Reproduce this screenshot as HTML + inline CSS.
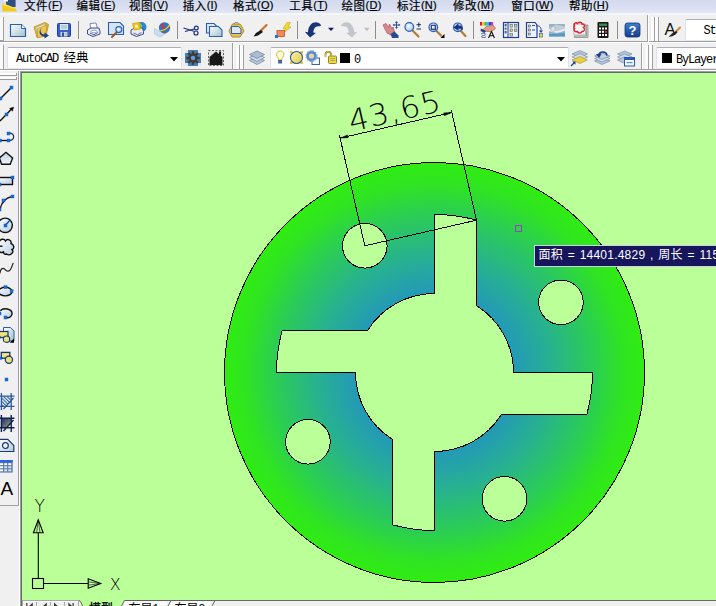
<!DOCTYPE html>
<html lang="zh"><head><meta charset="utf-8"><title>AutoCAD</title>
<style>
html,body{margin:0;padding:0;}
body{width:716px;height:606px;overflow:hidden;background:#f0f0f0;position:relative;font-family:"Liberation Sans","Noto Sans CJK SC",sans-serif;font-size:12px;color:#000;}
.abs{position:absolute;}
#menubar{left:0;top:0;width:716px;height:13px;background:linear-gradient(#d4daee 0%,#dae0f2 60%,#e2e7f5 100%);overflow:hidden;}
#menusep{left:0;top:13px;width:716px;height:2px;background:#f4f6fb;}
.mi{position:absolute;top:-3px;line-height:16px;font-size:12px;white-space:nowrap;}
.mi u{text-decoration:underline;text-underline-offset:0.5px;text-decoration-thickness:1px;}
.mi .cjm{position:relative;top:0.8px;font-size:11.5px;letter-spacing:0.5px;}
.mi .lt{font-size:11px;letter-spacing:0.2px;}
.mi{-webkit-text-stroke:0.2px #000;}
#row1{left:0;top:15px;width:716px;height:26px;background:#f0f0f0;}
.hline{left:0;width:716px;height:1px;}
.sep{width:1px;background:#a0a0a0;}
.combo{background:#fff;border:1px solid #dfe2ee;border-top-color:#adadb6;border-bottom-color:#e6e8f1;border-radius:2px;box-sizing:border-box;}
.mono{font-family:"Liberation Mono","Noto Sans CJK SC",monospace;font-size:12px;letter-spacing:-1.2px;white-space:nowrap;line-height:14px;}
.mono .cj{letter-spacing:0;font-family:"Noto Sans CJK SC",sans-serif;font-size:12.5px;}
.m11{font-size:11px;letter-spacing:-0.6px;}
#canvas{left:22px;top:73px;width:694px;height:527px;background:#bbff99;}
.draw{position:absolute;left:0;top:0;}
#tip{left:534px;top:245px;width:200px;height:21.5px;box-sizing:border-box;background:#17155c;border:1px solid #cfcfe6;color:#fff;font-size:12px;line-height:19.5px;padding-left:3.5px;letter-spacing:0.22px;word-spacing:1.2px;white-space:nowrap;overflow:hidden;}
#pick{left:515px;top:225px;width:7px;height:7px;box-sizing:border-box;border:1px solid #9a3fc0;}
.tabtxt{position:absolute;top:601.5px;font-size:12px;line-height:14px;white-space:nowrap;}
</style></head><body>
<div id="menubar" class="abs"><span class="mi" style="left:24px"><span class="cjm">文件</span><span class="lt">(<u>F</u>)</span></span><span class="mi" style="left:76.4px"><span class="cjm">编辑</span><span class="lt">(<u>E</u>)</span></span><span class="mi" style="left:129px"><span class="cjm">视图</span><span class="lt">(<u>V</u>)</span></span><span class="mi" style="left:182.7px"><span class="cjm">插入</span><span class="lt">(<u>I</u>)</span></span><span class="mi" style="left:233px"><span class="cjm">格式</span><span class="lt">(<u>O</u>)</span></span><span class="mi" style="left:289.3px"><span class="cjm">工具</span><span class="lt">(<u>T</u>)</span></span><span class="mi" style="left:341.6px"><span class="cjm">绘图</span><span class="lt">(<u>D</u>)</span></span><span class="mi" style="left:396.9px"><span class="cjm">标注</span><span class="lt">(<u>N</u>)</span></span><span class="mi" style="left:452.9px"><span class="cjm">修改</span><span class="lt">(<u>M</u>)</span></span><span class="mi" style="left:511.2px"><span class="cjm">窗口</span><span class="lt">(<u>W</u>)</span></span><span class="mi" style="left:568.9px"><span class="cjm">帮助</span><span class="lt">(<u>H</u>)</span></span></div>
<div id="menusep" class="abs"></div>
<div id="row1" class="abs"></div>
<div class="abs hline" style="top:41px;background:#a0a0a0"></div>
<div class="abs hline" style="top:42px;background:#fff"></div>
<div class="abs hline" style="top:69px;background:#a0a0a0"></div>
<div class="abs hline" style="top:70px;background:#fff"></div>
<!-- row 2 combos -->
<div class="abs combo" style="left:7px;top:47px;width:175px;height:22px"></div>
<div class="abs mono" style="left:16px;top:50px">AutoCAD<span class="cj" style="margin-left:5.5px">经典</span></div>
<div class="abs combo" style="left:270px;top:47px;width:299px;height:22px"></div>
<div class="abs mono" style="left:354px;top:53px">0</div>
<div class="abs combo" style="left:656px;top:47px;width:80px;height:22px"></div>
<div class="abs mono" style="left:676px;top:53px">ByLayer</div>
<div class="abs combo" style="left:685px;top:19px;width:60px;height:22px"></div>
<div class="abs mono" style="left:703.5px;top:24px">St</div>
<!-- canvas frame -->
<div class="abs" style="left:18px;top:71px;width:1px;height:434px;background:#a0a0a0"></div>
<div class="abs" style="left:19px;top:71px;width:1px;height:535px;background:#fff"></div>
<div class="abs" style="left:20px;top:71px;width:696px;height:530px;background:#a0a0a0"></div>
<div class="abs" style="left:21px;top:72px;width:695px;height:529px;background:#696969"></div>
<div id="canvas" class="abs"></div>
<div class="abs" style="left:0;top:505px;width:19px;height:1px;background:#a0a0a0"></div>
<!-- bottom tab strip -->
<div class="abs" style="left:22px;top:601px;width:694px;height:5px;background:#f0f0f0"></div>
<div class="abs" style="left:20px;top:600px;width:1px;height:6px;background:#a0a0a0"></div><div class="abs" style="left:21px;top:600px;width:1px;height:6px;background:#696969"></div>
<svg class="draw" width="716" height="606" viewBox="0 0 716 606">
<defs>
<radialGradient id="gf" gradientUnits="userSpaceOnUse" cx="434.5" cy="372.5" r="210.0">
<stop offset="0.30" stop-color="#2192c4"/>
<stop offset="0.375" stop-color="#2399b8"/>
<stop offset="0.55" stop-color="#27b092"/>
<stop offset="0.75" stop-color="#2bcc56"/>
<stop offset="0.9" stop-color="#2fe422"/>
<stop offset="1" stop-color="#30ec12"/>
</radialGradient>
</defs>
<path d="M224.50,372.50 A210.00,210.00 0 1 1 644.50,372.50 A210.00,210.00 0 1 1 224.50,372.50 Z M434.50,293.50 L434.50,214.50 A158.00,158.00 0 0 1 476.50,220.18 L476.50,305.59 A79.00,79.00 0 0 1 513.50,372.50 L592.50,372.50 A158.00,158.00 0 0 1 586.82,414.50 L501.41,414.50 A79.00,79.00 0 0 1 434.50,451.50 L434.50,530.50 A158.00,158.00 0 0 1 392.50,524.82 L392.50,439.41 A79.00,79.00 0 0 1 355.50,372.50 L276.50,372.50 A158.00,158.00 0 0 1 282.18,330.50 L367.59,330.50 A79.00,79.00 0 0 1 434.50,293.50 Z M538.65,302.30 A22.30,22.30 0 1 1 583.25,302.30 A22.30,22.30 0 1 1 538.65,302.30 Z M342.50,245.80 A22.30,22.30 0 1 1 387.10,245.80 A22.30,22.30 0 1 1 342.50,245.80 Z M285.65,441.80 A22.30,22.30 0 1 1 330.25,441.80 A22.30,22.30 0 1 1 285.65,441.80 Z M482.15,498.80 A22.30,22.30 0 1 1 526.75,498.80 A22.30,22.30 0 1 1 482.15,498.80 Z" fill="url(#gf)" fill-rule="evenodd" stroke="#000" stroke-width="1" shape-rendering="crispEdges"/>
<g stroke="#000" stroke-width="1" fill="none" shape-rendering="crispEdges">
<line x1="364.80" y1="245.80" x2="339.50" y2="135.46"/>
<line x1="476.50" y1="220.18" x2="451.20" y2="109.85"/>
<line x1="340.10" y1="138.10" x2="451.80" y2="112.48"/>
<line x1="364.80" y1="245.80" x2="476.50" y2="220.18"/>
</g>
<path d="M340.10,138.10 L347.59,134.94 L348.21,137.67 Z M451.80,112.48 L443.69,112.90 L444.32,115.63 Z" fill="#000" stroke="#000" stroke-width="0.5"/>
<text transform="translate(395.95,125.29) rotate(-12.92) translate(2.2,-3.8) scale(1.03,1)" letter-spacing="1.2" text-anchor="middle" font-family="'DejaVu Sans Light','DejaVu Sans',sans-serif" font-weight="200" font-size="30" fill="#000">43,65</text>
</svg>
<svg class="draw" width="716" height="606" viewBox="0 0 716 606">
<defs>
<linearGradient id="gdoc" x1="0" y1="0" x2="1" y2="1"><stop offset="0" stop-color="#ffffff"/><stop offset="1" stop-color="#9fc2c8"/></linearGradient>
<linearGradient id="glb" x1="0" y1="0" x2="1" y2="1"><stop offset="0" stop-color="#ffffff"/><stop offset="1" stop-color="#b4cbe2"/></linearGradient>
<linearGradient id="glb2" x1="0" y1="0" x2="0" y2="1"><stop offset="0" stop-color="#b9cde0"/><stop offset="1" stop-color="#f4f8fc"/></linearGradient>
<linearGradient id="ggrad" x1="0" y1="0" x2="1" y2="1"><stop offset="0" stop-color="#1c2f7a"/><stop offset="0.5" stop-color="#5a6670"/><stop offset="1" stop-color="#c8b830"/></linearGradient>
<linearGradient id="ghelp" x1="0" y1="0" x2="0" y2="1"><stop offset="0" stop-color="#3f7fd0"/><stop offset="1" stop-color="#123f8c"/></linearGradient>
<radialGradient id="glens" cx="0.4" cy="0.35" r="0.7"><stop offset="0" stop-color="#ffffff"/><stop offset="1" stop-color="#9cc4e8"/></radialGradient>
<linearGradient id="gyel" x1="0" y1="0" x2="1" y2="1"><stop offset="0" stop-color="#fff7a0"/><stop offset="1" stop-color="#e0c84a"/></linearGradient>
<pattern id="hat" width="2.4" height="2.4" patternUnits="userSpaceOnUse" patternTransform="rotate(-45)"><rect width="2.4" height="2.4" fill="#fff"/><rect width="1.2" height="2.4" fill="#2d62a8"/></pattern>
</defs>
<!-- ===== row 1 grips / separators ===== -->
<rect x="0" y="17" width="3" height="24" fill="#fafafa"/><rect x="3" y="17" width="1" height="24" fill="#a0a0a0"/><rect x="0" y="40" width="4" height="1" fill="#a0a0a0"/>
<g fill="#8c8c8c">
<rect x="78" y="21" width="1" height="18"/><rect x="177" y="21" width="1" height="18"/><rect x="297" y="21" width="1" height="18"/>
<rect x="375" y="21" width="1" height="18"/><rect x="473" y="21" width="1" height="18"/><rect x="617" y="21" width="1" height="18"/>
</g>
<rect x="647" y="15" width="1" height="27" fill="#a0a0a0"/><rect x="648" y="15" width="1" height="27" fill="#fff"/>
<g><rect x="651" y="17" width="3" height="24" fill="#fbfbfb"/><rect x="654" y="17" width="1" height="24" fill="#a0a0a0"/><rect x="655" y="17" width="3" height="24" fill="#fbfbfb"/><rect x="658" y="17" width="1" height="24" fill="#a0a0a0"/></g>
<!-- app icon -->
<path d="M6,0 H15.600 V7 H6 Z" fill="#2f4f80"/><path d="M4,0 H8 V1.500 H4 Z" fill="#f4f4f4"/>
<path d="M2.300,3 L15.600,8.300 L17,11.500 H2.300 Z" fill="#f2cc18"/><path d="M2.300,3 L15.600,8.300 L16,9.300 L2.300,5 Z" fill="#f8e060"/>
<!-- New -->
<path d="M10.5,24.5 H21.5 L25.5,28.5 V36.5 H10.5 Z" fill="url(#gdoc)" stroke="#2b5fb0" stroke-width="1.2"/>
<path d="M21.5,24.5 V28.5 H25.5" fill="#fff" stroke="#2b5fb0" stroke-width="1"/>
<!-- Open -->
<path d="M34,27 L45,22.5 L48.5,24.5 L46,36 L37,37.5 Z" fill="#e9b93a" stroke="#b88a20" stroke-width="0.8"/>
<path d="M36,27.5 L45,24 L43.5,33 L38,36 Z" fill="#e8f2fa" stroke="#8fb0d0" stroke-width="0.5"/>
<path d="M37.5,28.5 L47,25 L45.5,36 L37.5,37.5 Z" fill="#f0c74c" stroke="#b88a20" stroke-width="0.6"/>
<path d="M42.5,27.5 C39.5,29.5 40,34 44.5,34.5 L44.5,32.5 L49,35.5 L44.5,38.5 L44.5,36.5 C38.5,36 38,30 42.5,27.5 Z" fill="#1d3f86"/>
<!-- Save -->
<rect x="57.5" y="23.5" width="13" height="13" rx="1" fill="#3a63c8" stroke="#1f3f9a" stroke-width="1"/>
<rect x="60" y="24" width="8" height="6" fill="#dfe9f7"/>
<rect x="61" y="25.5" width="6" height="0.9" fill="#8aa4cc"/><rect x="61" y="27.5" width="6" height="0.9" fill="#8aa4cc"/>
<rect x="60.5" y="32" width="7" height="4.5" fill="#c8d4e8"/><rect x="62" y="32.5" width="2" height="4" fill="#2a4fb8"/><rect x="65.5" y="33" width="1.5" height="2" fill="#c8c060"/>
<!-- Print -->
<path d="M90,23.5 L96,23 L97.5,28.5 L91,29.5 Z" fill="#fff" stroke="#5a6aa0" stroke-width="0.8"/>
<path d="M87.5,30 L91,28 L99,28 L100,31.5 L100,34 L93,36.5 L87.5,34 Z" fill="#e8ecf6" stroke="#3a4a8a" stroke-width="1"/>
<path d="M90,33 L94,34.8 L98,32.5" fill="none" stroke="#3a4a8a" stroke-width="0.8"/>
<ellipse cx="94" cy="31.5" rx="3" ry="1.3" fill="#fff" stroke="#5a6aa0" stroke-width="0.6"/>
<!-- Preview -->
<path d="M108.5,22.5 H120 L123.5,26 V34.5 H108.5 Z" fill="#d4e4f4" stroke="#2b5fb0" stroke-width="1.1"/>
<line x1="117" y1="32" x2="112" y2="37" stroke="#9a5a20" stroke-width="2" stroke-linecap="round"/>
<circle cx="118.8" cy="29.6" r="3" fill="url(#glens)" stroke="#2b5fb0" stroke-width="1.1"/>
<!-- Publish -->
<circle cx="141.5" cy="27" r="5" fill="#2f86c8"/><path d="M139,23 C142,25 142,29 139.5,31.5" fill="none" stroke="#7fd08a" stroke-width="1.5"/>
<path d="M131,30 L134.5,28 L142.5,28 L143.5,31.5 L143.5,34 L136.5,36.5 L131,34 Z" fill="#e8ecf6" stroke="#3a4a8a" stroke-width="1"/>
<path d="M133.5,33 L137.5,34.8 L141.5,32.5" fill="none" stroke="#3a4a8a" stroke-width="0.8"/>
<path d="M132.5,23.5 L139.5,22.5 L140.5,29 L134,30 Z" fill="#f2c818" stroke="#c89a10" stroke-width="0.7"/>
<rect x="135.3" y="25" width="2.6" height="2.6" fill="#fff8c0"/>
<!-- 3DDWF -->
<path d="M154.5,28.5 L160,31.5 L166,28.5 L166,33.5 L160,37 L154.5,34 Z" fill="#c9dcf0" stroke="#a9c0dc" stroke-width="0.6"/>
<circle cx="164.5" cy="27.8" r="5.6" fill="#2a78c8"/>
<path d="M160,25 C163,28 167,29 170,27" fill="none" stroke="#e03030" stroke-width="1.2"/>
<path d="M163,22.8 C161.5,26 162.5,30.5 165,33.2" fill="none" stroke="#e03030" stroke-width="1.1"/>
<path d="M160,31 C164,30.5 168,27.5 169.5,25" fill="none" stroke="#e8e030" stroke-width="1.2"/>
<!-- Cut -->
<path d="M183.5,28 L194,31.2 M185,31.5 L194,29" stroke="#1d2f7a" stroke-width="1.1" fill="none"/>
<circle cx="196.3" cy="28" r="1.9" fill="none" stroke="#1d2f7a" stroke-width="1.2"/>
<circle cx="196" cy="33" r="2" fill="none" stroke="#1d2f7a" stroke-width="1.2"/>
<!-- Copy -->
<path d="M206.5,23.5 H214 L217,26.5 V33 H206.5 Z" fill="#d8e6f4" stroke="#2b5fb0" stroke-width="1.1"/>
<path d="M209.5,26.5 H218.5 L222,30 V36.5 H209.5 Z" fill="url(#gdoc)" stroke="#2b5fb0" stroke-width="1.1"/>
<!-- Paste -->
<path d="M232,24.5 L236.5,22.5 L241,25 L244,31 L240,37 L232,37 L229,31 Z" fill="#e4c050" stroke="#b08c28" stroke-width="1"/>
<path d="M234,24 C235,22 238,22 239,24 Z" fill="#f0f0f0" stroke="#606060" stroke-width="0.6"/>
<path d="M231.5,26.5 H238.5 L241,29 V33.5 H231.5 Z" fill="#dce8f6" stroke="#2b5fb0" stroke-width="1"/>
<!-- Match prop -->
<path d="M266.5,25 L260,31.5" stroke="#c8782c" stroke-width="2.2" stroke-linecap="round"/>
<path d="M261,30 L263,32 L258,35.5 L253.5,36.5 L256,33 Z" fill="#151515"/>
<!-- Block editor -->
<path d="M287,22.5 L290.5,22.5 L288,27 L291,27 L283,33.5 L285.5,28.5 L283,28.5 Z" fill="#f8d820" stroke="#c09a10" stroke-width="0.5"/>
<rect x="277" y="30.5" width="7.5" height="6" fill="#f08a5a" stroke="#c0502a" stroke-width="0.8"/>
<rect x="275" y="35" width="3" height="3" fill="#1f6fe0"/>
<!-- Undo -->
<path d="M304.8,31.8 L310.1,37.6 L315.9,32.9 L313.3,32.6 C313.5,28.5 315.5,25.5 319.6,26.3 L321.2,25.4 C319,21.5 313.5,21.5 310.8,24.5 C309,26.5 308,29.5 308,32.2 Z" fill="#1a3478"/>
<path d="M328,27.700 H334 L331,31 Z" fill="#141a6a"/>
<!-- Redo -->
<path d="M357.3,31.8 L352.0,37.6 L346.2,32.9 L348.8,32.6 C348.6,28.5 346.6,25.5 342.5,26.3 L340.9,25.4 C343.1,21.5 348.6,21.5 351.3,24.5 C353.1,26.5 354.1,29.5 354.1,32.2 Z" fill="#c2c6ca"/>
<path d="M364,27.700 H369.600 L366.800,31 Z" fill="#b8b8c8"/>
<!-- Pan -->
<path d="M383,25 L386,23.5 L388.5,27.5 L389.5,24 L392,29 L393,27 L394.5,32 L391,35 L387,33 Z" fill="#d88a8a" stroke="#a85060" stroke-width="0.7"/>
<path d="M390.5,34 L394.5,31.5 L398.5,35.5 L398.5,38 L392,38 Z" fill="#2a4a8c"/>
<path d="M396.5,22 V28 M393.5,25 H399.5" stroke="#2a4a9c" stroke-width="1"/><path d="M396.5,21 L395,23 H398 Z M396.5,29 L395,27 H398 Z M392.5,25 L394.5,23.7 V26.3 Z M400.5,25 L398.5,23.7 V26.3 Z" fill="#2a4a9c"/>
<!-- Zoom realtime -->
<line x1="412.5" y1="30.5" x2="418.5" y2="36.5" stroke="#b87838" stroke-width="2.2" stroke-linecap="round"/>
<circle cx="409.3" cy="27" r="4.3" fill="url(#glens)" stroke="#2b5fb0" stroke-width="1.2"/>
<path d="M418.8,22.5 V27 M416.5,24.7 H421 M416.5,29 H421" stroke="#1a2a5a" stroke-width="1"/>
<!-- Zoom window -->
<line x1="436" y1="30.5" x2="441" y2="35.5" stroke="#b87838" stroke-width="2.2" stroke-linecap="round"/>
<circle cx="433.3" cy="27.3" r="4.3" fill="url(#glens)" stroke="#2b5fb0" stroke-width="1.2"/>
<rect x="431.3" y="25.3" width="4" height="4" fill="none" stroke="#1a2a7a" stroke-width="1.1"/>
<path d="M444.5,34 V38 H440.5 Z" fill="#000"/>
<!-- Zoom prev -->
<line x1="460.5" y1="30.5" x2="465.5" y2="36" stroke="#b87838" stroke-width="2.2" stroke-linecap="round"/>
<circle cx="457.8" cy="27.3" r="4.3" fill="url(#glens)" stroke="#2b5fb0" stroke-width="1.2"/>
<path d="M453.5,27.5 L458.5,23 L458.5,25.5 C462,25 463.5,27.5 462.5,30.5 C461.5,28.5 460.5,28.5 458.5,28.8 L458.5,31 Z" fill="#1a3382"/>
<!-- Properties -->
<rect x="480" y="22" width="2.2" height="3.5" fill="#e02020"/><rect x="482.2" y="22" width="2.2" height="3.5" fill="#f0d020"/><rect x="484.4" y="22" width="2.2" height="3.5" fill="#30c030"/><rect x="486.6" y="22" width="2.2" height="3.5" fill="#20c0e0"/><rect x="488.8" y="22" width="2.2" height="3.5" fill="#3040e0"/><rect x="491" y="22" width="2.2" height="3.5" fill="#d030d0"/>
<path d="M483,29.5 L487,26 L493.5,25.5 L495.5,28.5 L491.5,31.5 L486,31.5 Z" fill="#e0a088" stroke="#a86850" stroke-width="0.7"/>
<path d="M481,28.5 L486,31 L484.5,33 L480.5,31 Z" fill="#30407a"/>
<path d="M481,34 C483,32.5 485,33 485.5,34.2 C485.5,35.8 481.5,35.2 481.5,36.6 C482,37.8 484.5,37.8 486,36.8" fill="none" stroke="#2a5aa0" stroke-width="1"/>
<path d="M488.5,38 L491.5,31.5 L494.5,38 M489.7,35.8 H493.3" fill="none" stroke="#101010" stroke-width="1.1"/>
<!-- DesignCenter -->
<rect x="503.5" y="22.5" width="15" height="15" fill="#eef3fb" stroke="#1f3f9a" stroke-width="1.2"/>
<rect x="507.5" y="22.5" width="1" height="15" fill="#1f3f9a"/>
<g fill="#e8d84a" stroke="#2a4a9a" stroke-width="0.5"><rect x="505" y="24.5" width="1.6" height="1.6"/><rect x="505" y="28" width="1.6" height="1.6"/><rect x="505" y="31.5" width="1.6" height="1.6"/><rect x="510" y="24.5" width="2.6" height="2.6"/><rect x="514.3" y="24.5" width="2.6" height="2.6"/><rect x="510" y="29" width="2.6" height="2.6"/><rect x="514.3" y="29" width="2.6" height="2.6"/><rect x="510" y="33.5" width="2.6" height="2.6"/></g>
<!-- Tool palettes -->
<path d="M526.5,22.5 H535 L537,25 V37.5 H526.5 Z" fill="#eef3fb" stroke="#1f3f9a" stroke-width="1.2"/>
<g fill="#e8d84a" stroke="#2a4a9a" stroke-width="0.5"><rect x="528.5" y="25" width="2" height="2"/><rect x="528.5" y="29" width="2" height="2"/><rect x="528.5" y="33" width="2" height="2"/></g>
<rect x="532" y="25" width="3" height="1" fill="#2a4a9a"/><rect x="532" y="29.5" width="3" height="1" fill="#2a4a9a"/>
<path d="M536,26 C540,25 541.5,28 541,31" fill="none" stroke="#2a4a9a" stroke-width="1"/><path d="M539,30.5 L543,30.5 L541,33 Z" fill="#2a4a9a"/>
<rect x="539.5" y="33.5" width="3" height="3.5" fill="#e8d84a" stroke="#2a4a9a" stroke-width="0.6"/>
<!-- Sheet set -->
<rect x="549" y="24" width="16" height="12.5" fill="#8fb3cf"/>
<path d="M549,28 L556,24.5 L565,26.5 L565,31 L557,33.5 L549,31.5 Z" fill="#c4ccd4"/>
<path d="M549,30 L557,32 L565,29.5" fill="none" stroke="#eef2f6" stroke-width="1.4"/>
<ellipse cx="553" cy="29" rx="2.2" ry="2.6" fill="#dfe4e8" stroke="#9aa4ae" stroke-width="0.5"/>
<path d="M549,34 L565,33 V36.5 H549 Z" fill="#5a9ac0"/>
<!-- Markup -->
<path d="M576,25 H588 V37.5 H574.5 V36 H586.5 V25" fill="#d4d4d4" stroke="#707070" stroke-width="0.6"/>
<rect x="574" y="24" width="11.5" height="11" fill="#f4f4f4" stroke="#8a8a8a" stroke-width="0.6"/>
<path d="M574.5,26 C573,23.5 576,22 577.5,23.5 C578.5,21.5 582,22 582,24 C584.5,23.5 585.5,26.5 583.5,27.5 C585.5,29 584,32 582,31.5 C581,33.5 578,33.5 577.5,31.5 C575,32.5 573,30 574.5,28.5 C573.5,28 573.5,26.5 574.5,26 Z" fill="none" stroke="#e02030" stroke-width="1.4"/>
<!-- Calc -->
<rect x="597.5" y="22" width="11" height="16" rx="1" fill="#181818"/>
<rect x="599" y="23.5" width="8" height="2.5" fill="#3a8a4a"/>
<g fill="#fff"><rect x="599" y="27.5" width="2" height="2"/><rect x="602" y="27.5" width="2" height="2"/><rect x="605" y="27.5" width="2" height="2"/><rect x="599" y="30.8" width="2" height="2"/><rect x="602" y="30.8" width="2" height="2"/><rect x="599" y="34" width="2" height="2"/><rect x="602" y="34" width="2" height="2"/><rect x="605" y="34" width="2" height="2"/></g><rect x="605" y="30.8" width="2" height="2" fill="#e03030"/>
<!-- Help -->
<rect x="625" y="23" width="15" height="14" rx="2.5" fill="url(#ghelp)" stroke="#0e3478" stroke-width="0.8"/>
<text x="632.5" y="35" text-anchor="middle" font-family="'Liberation Sans',sans-serif" font-weight="bold" font-size="13" fill="#fff">?</text>
<!-- Text style icon -->
<text x="664.5" y="34.5" font-family="'Liberation Sans',sans-serif" font-size="16.5" fill="#101010">A</text>
<path d="M680,27.5 L675.5,32" stroke="#d8863a" stroke-width="2" stroke-linecap="round"/>
<path d="M676.5,31 L677.5,32.5 L673,36 L668.5,37 L672,33.5 Z" fill="#202020"/>
<!-- ===== row 2 ===== -->
<rect x="0" y="45" width="3" height="24" fill="#fafafa"/><rect x="3" y="45" width="1" height="24" fill="#a0a0a0"/>
<path d="M170,57 H178 L174,61.5 Z" fill="#000"/>
<!-- gear -->
<rect x="185" y="50" width="16" height="16" fill="#4a7fb4"/>
<g fill="#dfe8f2"><rect x="185" y="50" width="3" height="3"/><rect x="198" y="50" width="3" height="3"/><rect x="185" y="63" width="3" height="3"/><rect x="198" y="63" width="3" height="3"/></g>
<g transform="translate(193,58)" fill="#3c3c3c"><circle r="4.6"/><g id="tooth"><rect x="-1.3" y="-6.8" width="2.6" height="13.6"/></g><use href="#tooth" transform="rotate(45)"/><use href="#tooth" transform="rotate(90)"/><use href="#tooth" transform="rotate(135)"/><circle r="2.2" fill="#6a9ad0"/></g>
<!-- house -->
<rect x="208.500" y="50.500" width="15" height="15" fill="#e4e4e4" stroke="#606060" stroke-width="1" stroke-dasharray="2 1.5"/>
<path d="M209.500,57 L216,51.500 L222.500,57 V65 H209.500 Z" fill="#181818"/><rect x="219" y="51.500" width="2" height="4" fill="#181818"/>
<rect x="232" y="43" width="1" height="26" fill="#a0a0a0"/><rect x="233" y="43" width="1" height="26" fill="#fff"/>
<g><rect x="236" y="45" width="3" height="24" fill="#fbfbfb"/><rect x="239" y="45" width="1" height="24" fill="#a0a0a0"/><rect x="240" y="45" width="3" height="24" fill="#fbfbfb"/><rect x="243" y="45" width="1" height="24" fill="#a0a0a0"/></g>
<!-- layers -->
<g stroke="#6a7f98" stroke-width="0.7"><path d="M249.500,60.500 L257,57 L264.500,60.500 L257,64.500 Z" fill="#b8c8dc"/><path d="M249.500,57.500 L257,54 L264.500,57.500 L257,61.500 Z" fill="#cfdcea"/><path d="M249.500,54.500 L257,51 L264.500,54.500 L257,58.500 Z" fill="#a9bcd4"/></g>
<!-- bulb -->
<path d="M280.200,51 C276.500,51 275.500,55 277.800,57.500 C278.600,58.500 278.500,59.500 278.600,60 H281.800 C281.900,59.500 281.800,58.500 282.600,57.500 C284.900,55 283.900,51 280.200,51 Z" fill="#fffbe0" stroke="#cfb21c" stroke-width="1"/>
<rect x="278.600" y="60.300" width="3.200" height="2.800" fill="#4a6ab0" stroke="#2a3a70" stroke-width="0.5"/>
<!-- sun -->
<g fill="#e8c020"><rect x="290" y="51" width="2.500" height="2.500"/><rect x="300.500" y="51" width="2.500" height="2.500"/><rect x="290" y="61.500" width="2.500" height="2.500"/><rect x="300.500" y="61.500" width="2.500" height="2.500"/></g>
<circle cx="296.500" cy="57.500" r="6" fill="url(#gyel)" stroke="#2a5ab0" stroke-width="1.1"/>
<!-- sun + viewport -->
<rect x="312" y="58" width="7.500" height="6.500" fill="#f4f8fc" stroke="#3a62a8" stroke-width="1"/>
<circle cx="311.500" cy="56" r="5.300" fill="#5a8ad0" stroke="#86a8dc" stroke-width="1.400" stroke-dasharray="1.600 1.200"/>
<circle cx="311.500" cy="56" r="2.600" fill="#e8d8a0"/>
<!-- lock -->
<path d="M325.500,57 V54.500 C325.500,51 331,51 331,54.500 V55.500" fill="none" stroke="#8a7a18" stroke-width="1.700"/>
<path d="M325.500,57 V54.500 C325.500,51 331,51 331,54.500 V55.500" fill="none" stroke="#f0e060" stroke-width="0.700"/>
<rect x="328.500" y="56" width="8" height="7.500" rx="1" fill="#e8d850" stroke="#8a7a18" stroke-width="0.900"/>
<path d="M330,58.500 H335 M330,60.500 H335" stroke="#a89828" stroke-width="0.700"/>
<rect x="340" y="53" width="10" height="10" fill="#000"/>
<path d="M557,57 H565 L561,61.500 Z" fill="#000"/>
<!-- make object layer current -->
<g stroke="#6a7f98" stroke-width="0.600"><path d="M572,54 L580,50.500 L587.500,54 L580,57.500 Z" fill="#b4c6dc"/><path d="M572,57 L580,53.500 L587.500,57 L580,60.500 Z" fill="#d0dcea"/><path d="M572,60 L580,56.500 L587.500,60 L580,63.500 Z" fill="#e8d040" stroke="#a89020"/></g>
<path d="M571,66 L574.500,62.500" stroke="#1a3a9a" stroke-width="1.200"/><path d="M575.500,61.500 V64.700 L572.300,61.500 Z" fill="#1a3a9a"/>
<!-- layer previous -->
<g stroke="#6a7f98" stroke-width="0.600"><path d="M594.500,61 L602,58 L610,61 L602,64.500 Z" fill="#b8c8dc"/><path d="M594.500,58.500 L602,55.500 L610,58.500 L602,62 Z" fill="#d4deea"/><path d="M594.500,56 L602,53 L610,56 L602,59.500 Z" fill="#c0cfe0"/></g>
<path d="M598.500,55.500 C599.500,51 606,50.500 607,55.500" fill="none" stroke="#1a3a8a" stroke-width="1.600"/><path d="M596,54 L599,58 L601.500,54 Z" fill="#1a3a8a"/>
<!-- layer states -->
<g stroke="#6a7f98" stroke-width="0.600"><path d="M617.500,54 L624.500,51 L632,54 L624.500,57.500 Z" fill="#b4c6dc"/><path d="M617.500,57 L624.500,54 L632,57 L624.500,60.500 Z" fill="#d0dcea"/><path d="M617.500,60 L624.500,57 L632,60 L624.500,63.500 Z" fill="#b8c8dc"/></g>
<rect x="624.500" y="57.500" width="10" height="8.500" fill="#f4f8fc" stroke="#2a5ab0" stroke-width="1"/><rect x="624.500" y="57.500" width="10" height="2.500" fill="#2a5ab0"/><rect x="626.500" y="62" width="6" height="1.200" fill="#6a8ac0"/>
<rect x="641" y="43" width="1" height="26" fill="#a0a0a0"/><rect x="642" y="43" width="1" height="26" fill="#fff"/>
<g><rect x="645" y="45" width="3" height="24" fill="#fbfbfb"/><rect x="648" y="45" width="1" height="24" fill="#a0a0a0"/><rect x="649" y="45" width="3" height="24" fill="#fbfbfb"/><rect x="652" y="45" width="1" height="24" fill="#a0a0a0"/></g>
<rect x="662" y="53" width="10" height="10" fill="#000"/>
<!-- ===== left toolbar ===== -->
<rect x="0" y="73" width="16" height="2" fill="#fcfcfc"/><rect x="0" y="75" width="17" height="1" fill="#9a9a9a"/><rect x="16" y="73" width="1" height="3" fill="#9a9a9a"/>
<rect x="0" y="77" width="16" height="2" fill="#fcfcfc"/><rect x="0" y="79" width="17" height="1" fill="#9a9a9a"/><rect x="16" y="77" width="1" height="3" fill="#9a9a9a"/>
<g fill="#1470e0" stroke="#0a4fb0" stroke-width="0.400" id="lt">
<!-- 1 line -->
<path d="M0.500,98.500 L11.500,87.500" stroke="#101010" stroke-width="1.400" fill="none"/>
<rect x="10" y="86" width="3" height="3"/><rect x="-1" y="97" width="3" height="3"/>
<!-- 2 xline -->
<path d="M0,121 L12,108.500" stroke="#101010" stroke-width="1.400" fill="none"/><path d="M14,106.800 L9.200,108.200 L12.600,111.600 Z" fill="#101010" stroke="none"/>
<rect x="5" y="113" width="3" height="3"/>
<!-- 3 pline -->
<path d="M0,140.500 H8" stroke="#101010" stroke-width="1.300" fill="none"/><path d="M9.500,133.200 C15,133.500 15,140 9.500,140.500" stroke="#202a4a" stroke-width="1.200" fill="none"/>
<rect x="7" y="132" width="3" height="3"/><rect x="7" y="139" width="3" height="3"/><rect x="-1.500" y="139" width="3" height="3"/>
<!-- 4 polygon -->
<path d="M5.900,152.300 L12.600,158 L10.200,164.300 L1.600,164.300 L-0.600,158 Z" fill="url(#glb2)" stroke="#101010" stroke-width="1.400"/>
<!-- 5 rect -->
<rect x="-2" y="177.500" width="14.500" height="7" fill="url(#glb)" stroke="#101010" stroke-width="1.400"/>
<rect x="11" y="176" width="3" height="3"/><rect x="-1.500" y="183" width="2.500" height="3"/>
<!-- 6 arc -->
<path d="M12,196.500 C5.500,198 1.500,202 0.200,209" stroke="#202020" stroke-width="1.300" fill="none"/>
<rect x="11" y="195" width="3" height="3"/><rect x="2" y="199" width="3" height="3"/><rect x="-1.500" y="208" width="2.500" height="3"/>
<!-- 7 circle -->
<circle cx="5.200" cy="225.300" r="7.200" fill="url(#glb)" stroke="#101010" stroke-width="1.400"/>
<path d="M5.500,225 L10.300,220" stroke="#0a4fb0" stroke-width="1.300" fill="none"/><rect x="4" y="224" width="3" height="3"/>
<!-- 8 cloud -->
<path d="M-1,242.500 C0,238.500 4.500,238.500 5.500,241 C7,238.500 12,239.500 11,243.500 C14.500,244.500 14.500,249 12,249.500 C14.500,252.500 10,256.500 6.500,254 C4.500,255 3.500,253 3.500,252 C1.500,253 -1,252.500 -1,250 Z" fill="url(#glb)" stroke="#101010" stroke-width="1.400"/>
<path d="M-1,246.200 L2.500,246.200" stroke="#101010" stroke-width="1.400" fill="none"/>
<!-- 9 spline -->
<path d="M-0.300,273.500 C0.800,268.500 2.800,267.500 4.800,269.300 C7,271.500 9,272 10.500,269.500 C12,267 12.500,265 13.200,263" stroke="#202020" stroke-width="1.200" fill="none"/>
<!-- 10 ellipse -->
<ellipse cx="5.300" cy="291.600" rx="6.800" ry="4.300" fill="url(#glb)" stroke="#101010" stroke-width="1.400"/>
<rect x="4" y="285.800" width="3" height="2.800"/><rect x="10.300" y="289.800" width="2.800" height="3"/>
<!-- 11 ellipse arc -->
<path d="M0,311.500 C2,307.500 12.500,308 12,314 C11.600,317 8,318 5.500,317.600 C2,317 0,314 0,311.500 Z" fill="url(#glb)" stroke="none"/>
<path d="M0.300,311 C2.500,307.500 12.500,308 12,314 C11.600,317 8.500,318 6.500,317.700" fill="none" stroke="#101010" stroke-width="1.400"/>
<rect x="4" y="316" width="3" height="3"/><rect x="-2" y="312" width="3" height="3"/>
<!-- 12 insert block -->
<path d="M3.500,327.500 H10.500 L14,331 V341 H3.500 Z" fill="url(#gdoc)" stroke="#2a5aa8" stroke-width="1"/>
<rect x="-1.500" y="331.500" width="9.500" height="6" fill="#f0e478" stroke="#1a3370" stroke-width="1.200"/>
<circle cx="6.500" cy="339.200" r="3.200" fill="#ece078" stroke="#1a3370" stroke-width="1.100"/>
<rect x="-2" y="336" width="2.500" height="2.500"/>
<path d="M14,338.500 V342.800 H9.700 Z" fill="#000" stroke="none"/>
<!-- 13 make block -->
<rect x="1.300" y="352.400" width="8.500" height="5.800" fill="#f0e478" stroke="#1a3370" stroke-width="1.300"/>
<circle cx="8.900" cy="359.800" r="3.600" fill="#ece078" stroke="#1a3370" stroke-width="1.200"/>
<path d="M0,358.200 H3" stroke="#1a3370" stroke-width="1" fill="none"/><rect x="-1.500" y="357" width="3.500" height="2.300"/>
<!-- 14 point -->
<rect x="5" y="378" width="3" height="3"/>
<!-- 15 hatch -->
<path d="M1.500,396.500 H11 V401 L5.500,406 H1.500 Z" fill="url(#hat)" stroke="none"/>
<path d="M1.400,393 V410 M11.200,393 V410 M-1,396.200 H14.500 M-1,406.300 H14.500 M3.500,409 L13.500,398" stroke="#2d5a9c" stroke-width="1.300" fill="none"/>
<!-- 16 gradient -->
<path d="M1.500,418.500 H11 V422.500 L6,427.500 H1.500 Z" fill="url(#ggrad)" stroke="none"/>
<path d="M1.400,415 V432 M11.200,415 V432 M-1,418.200 H14.500 M-1,427.800 H14.500 M3.500,431 L13.500,420" stroke="#0f1f4f" stroke-width="1.400" fill="none"/>
<!-- 17 region -->
<path d="M-2,439.400 H7.800 L13.800,445.500 V451.500 H-2 Z" fill="url(#glb)" stroke="#1a3a6e" stroke-width="1.200"/>
<circle cx="5.400" cy="445.600" r="2.900" fill="#eef0f4" stroke="#1a3a6e" stroke-width="1.200"/>
<!-- 18 table -->
<rect x="-2" y="460" width="14.700" height="12.600" fill="#5f7fae" stroke="none"/><rect x="-2" y="460" width="14.700" height="2.600" fill="#2f62e0" stroke="none"/>
<g fill="#fff" stroke="none"><rect x="-2" y="463.200" width="5" height="1.900"/><rect x="4.200" y="463.200" width="2.900" height="1.900"/><rect x="8.300" y="463.200" width="2.900" height="1.900"/><rect x="-2" y="466.300" width="5" height="1.900"/><rect x="4.200" y="466.300" width="2.900" height="1.900" fill="#dfe7f5"/><rect x="8.300" y="466.300" width="2.900" height="1.900" fill="#dfe7f5"/><rect x="-2" y="469.400" width="5" height="1.900"/><rect x="4.200" y="469.400" width="2.900" height="1.900" fill="#dfe7f5"/><rect x="8.300" y="469.400" width="2.900" height="1.900" fill="#dfe7f5"/></g>
</g>
<!-- ===== UCS icon ===== -->
<g stroke="#000" stroke-width="1.100" fill="none">
<rect x="32.500" y="578.500" width="11" height="10"/>
<path d="M38.300,578.500 V532.700 M43.500,583.500 H88.200"/>
<path d="M38.300,519.800 L33.400,532.700 H43.200 Z"/><path d="M38.300,520 L36.600,532.700 M38.300,520 L40,532.700" stroke-width="0.600"/>
<path d="M100.800,583.500 L88.200,578.800 V588.200 Z"/><path d="M100.500,583.500 L88.200,581.800 M100.500,583.500 L88.200,585.200" stroke-width="0.600"/>
</g>
<text x="34.500" y="511.800" font-family="'DejaVu Sans Light','DejaVu Sans',sans-serif" font-weight="200" font-size="17" fill="#000">Y</text>
<text x="109.800" y="589.800" font-family="'DejaVu Sans Light','DejaVu Sans',sans-serif" font-weight="200" font-size="16" fill="#000">X</text>
<!-- ===== bottom tab strip ===== -->
<g>
<rect x="22" y="600" width="56" height="6" fill="#f0f0f0"/>
<path d="M22,600.500 H78 M22.500,600 V606 M36.500,600 V606 M50.500,600 V606 M64.500,600 V606 M78.500,600 V606" stroke="#a8a8a8" stroke-width="1" fill="none"/>
<path d="M23,601.500 H78" stroke="#fff" stroke-width="1"/>
<g fill="#383838"><rect x="26.200" y="603" width="1.200" height="3"/><path d="M32.800,602.600 V606 H29.200 Z"/><path d="M46.800,602.600 V606 H43.200 Z"/><path d="M54,602.600 V606 H57.600 Z"/><path d="M68.400,602.600 V606 H72 Z"/><rect x="72.500" y="603" width="1.200" height="3"/></g>
<path d="M79,600 L82,606 H122 L125,600 Z" fill="#bbff99"/>
<path d="M79,600.500 C81,601 81.500,604 82.500,606" stroke="#606060" stroke-width="1" fill="none"/>
<path d="M121.500,606 L124.500,600.500 H168 M168,606 L171,600.500 H212 M212,606 L215,600.500" stroke="#606060" stroke-width="1" fill="none"/>
<path d="M122.500,606 L125,601.500 H167.500 L165.500,606 Z M169,606 L171.500,601.500 H211.500 L209.500,606 Z" fill="#fafafa"/>
</g>
</svg>

<div class="abs" style="left:0.5px;top:478.5px;width:14px;font-size:19px;line-height:20px">A</div>
<span class="tabtxt" style="left:89px;-webkit-text-stroke:0.3px #000">模型</span>
<span class="tabtxt" style="left:128.5px">布局1</span>
<span class="tabtxt" style="left:174.5px">布局2</span>
<div id="pick" class="abs"></div>
<div id="tip" class="abs">面积 = 14401.4829 , 周长 = 115</div>
</body></html>
